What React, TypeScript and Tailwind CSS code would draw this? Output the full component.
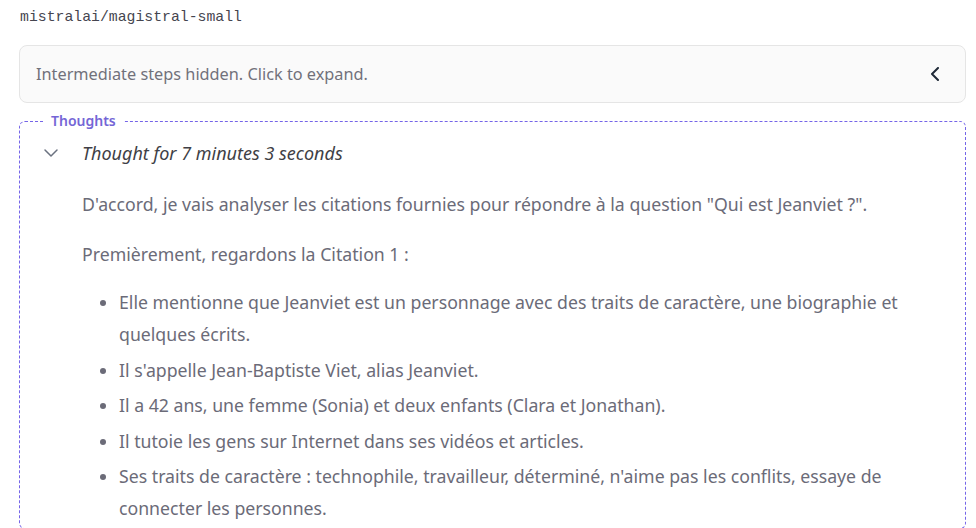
import { ChevronDown } from "lucide-react";

const items = [
  "Elle mentionne que Jeanviet est un personnage avec des traits de caractère, une biographie et quelques écrits.",
  "Il s'appelle Jean-Baptiste Viet, alias Jeanviet.",
  "Il a 42 ans, une femme (Sonia) et deux enfants (Clara et Jonathan).",
  "Il tutoie les gens sur Internet dans ses vidéos et articles.",
  "Ses traits de caractère : technophile, travailleur, déterminé, n'aime pas les conflits, essaye de connecter les personnes.",
];

export default function App() {
  return (
    <main className="w-[976px] h-[528px] overflow-hidden bg-white pl-[19px] pr-[10px] font-['Noto_Sans',sans-serif]">
      <div className="pt-[8px] pl-[1px] font-['Liberation_Mono',monospace] text-[14.8px] leading-[18px] text-[#45454f]">
        mistralai/magistral-small
      </div>

      <button className="mt-[19px] flex h-[58px] w-full items-center justify-between rounded-lg border border-[#e5e5e5] bg-[#fafafa] pl-[16px] pr-[25px] text-left">
        <span className="text-[16.3px] text-[#71717a]">Intermediate steps hidden. Click to expand.</span>
        <svg width="10" height="14" viewBox="0 0 10 14" fill="none" stroke="#1f2937" strokeWidth="2" strokeLinecap="round" strokeLinejoin="round">
          <path d="M8 1 L2 7 L8 13" />
        </svg>
      </button>

      <section className="relative mt-[18px] rounded-md border border-dashed border-[#7565e8] pl-[22px] pr-[20px] pt-[19px]">
        <span className="absolute -top-[9px] left-[23px] bg-white px-[8px] text-[14px] font-semibold leading-[16px] text-[#7466d6]">
          Thoughts
        </span>
        <div className="flex items-center gap-[19px]">
          <ChevronDown size={24} strokeWidth={1.5} className="-ml-[3px] text-[#6b7280]" />
          <span className="text-[18px] italic leading-[24px] text-[#3f3f46]">Thought for 7 minutes 3 seconds</span>
        </div>
        <div className="pl-[40px] pt-[23px] text-[17.7px] leading-[32px] text-[#6b6b78]">
          <p>D'accord, je vais analyser les citations fournies pour répondre à la question "Qui est Jeanviet ?".</p>
          <p className="mt-[18px]">Premièrement, regardons la Citation 1 :</p>
          <ul className="mt-[16px] list-disc pl-[37px] marker:text-[#6b6b78]">
            {items.map((t) => (
              <li key={t} className="mb-[3.5px]">
                {t}
              </li>
            ))}
          </ul>
        </div>
      </section>
    </main>
  );
}
